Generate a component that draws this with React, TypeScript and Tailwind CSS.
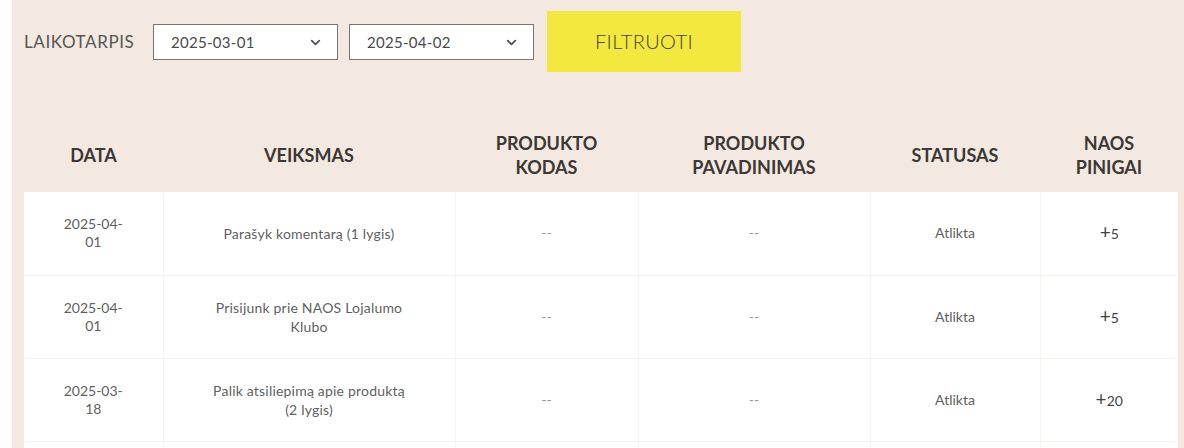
import { ChevronDown } from "lucide-react";

type Row = {
  date: [string, string];
  action: string[];
  status: string;
  points: string;
};

const rows: Row[] = [
  { date: ["2025-04-", "01"], action: ["Parašyk komentarą (1 lygis)"], status: "Atlikta", points: "5" },
  { date: ["2025-04-", "01"], action: ["Prisijunk prie NAOS Lojalumo", "Klubo"], status: "Atlikta", points: "5" },
  { date: ["2025-03-", "18"], action: ["Palik atsiliepimą apie produktą", "(2 lygis)"], status: "Atlikta", points: "20" },
];

const cols = ["w-[139px]", "w-[292px]", "w-[183px]", "w-[232px]", "w-[170px]", "w-[138px]"];

function DateSelect({ value }: { value: string }) {
  return (
    <div className="flex h-[36px] w-[185px] items-center justify-between border-[1.5px] border-[#7a7674] bg-white pl-[17px] pr-[14px] text-[15px] tracking-[0.3px] text-[#4a4a4a]">
      <span>{value}</span>
      <ChevronDown size={15} strokeWidth={3} className="text-[#555]" />
    </div>
  );
}

export default function App() {
  return (
    <div className="h-[448px] w-[1184px] overflow-hidden bg-white pl-[12px] font-['Lato','Liberation_Sans',sans-serif]">
      <div className="h-full bg-[#f4e9e0] pl-[12px] pr-[6px]">
        <div className="flex h-[86px] items-center pb-[2px]">
          <span className="w-[129px] text-[17px] tracking-[0.6px] text-[#555]">LAIKOTARPIS</span>
          <DateSelect value="2025-03-01" />
          <div className="w-[11px]" />
          <DateSelect value="2025-04-02" />
          <button className="ml-[13px] mt-[-2px] h-[61px] w-[194px] bg-[#f3e83d] text-[20px] font-light tracking-[0.4px] text-[#45432f]">
            FILTRUOTI
          </button>
        </div>
        <table className="w-[1154px] table-fixed border-collapse">
          <colgroup>
            {cols.map((c, i) => (
              <col key={i} className={c} />
            ))}
          </colgroup>
          <thead>
            <tr className="h-[106px] text-[18px] font-bold leading-[24px] text-[#3b3836]">
              <th className="pt-[32px]">DATA</th>
              <th className="pt-[32px]">VEIKSMAS</th>
              <th className="pt-[32px]">PRODUKTO<br />KODAS</th>
              <th className="pt-[32px]">PRODUKTO<br />PAVADINIMAS</th>
              <th className="pt-[32px]">STATUSAS</th>
              <th className="pt-[32px]">NAOS<br />PINIGAI</th>
            </tr>
          </thead>
          <tbody className="bg-white text-center text-[14px] leading-[18px] text-[#5f5f5f]">
            {rows.map((r, i) => (
              <tr key={i} className="h-[83px] border-b border-[#f6f3ef]">
                <td className="border-r border-[#f6f3ef]">
                  {r.date[0]}
                  <br />
                  {r.date[1]}
                </td>
                <td className="border-r border-[#f6f3ef] leading-[19px] tracking-[0.2px]">
                  {r.action.map((a, j) => (
                    <div key={j}>{a}</div>
                  ))}
                </td>
                <td className="border-r border-[#f6f3ef] text-[#999]">--</td>
                <td className="border-r border-[#f6f3ef] text-[#999]">--</td>
                <td className="border-r border-[#f6f3ef]">{r.status}</td>
                <td className="text-[#444]">
                  <span className="text-[19px]">+</span>
                  <span className="text-[14px]">{r.points}</span>
                </td>
              </tr>
            ))}
            <tr className="h-[40px]">
              <td className="border-r border-[#f6f3ef]" />
              <td className="border-r border-[#f6f3ef]" />
              <td className="border-r border-[#f6f3ef]" />
              <td className="border-r border-[#f6f3ef]" />
              <td className="border-r border-[#f6f3ef]" />
              <td />
            </tr>
          </tbody>
        </table>
      </div>
    </div>
  );
}
